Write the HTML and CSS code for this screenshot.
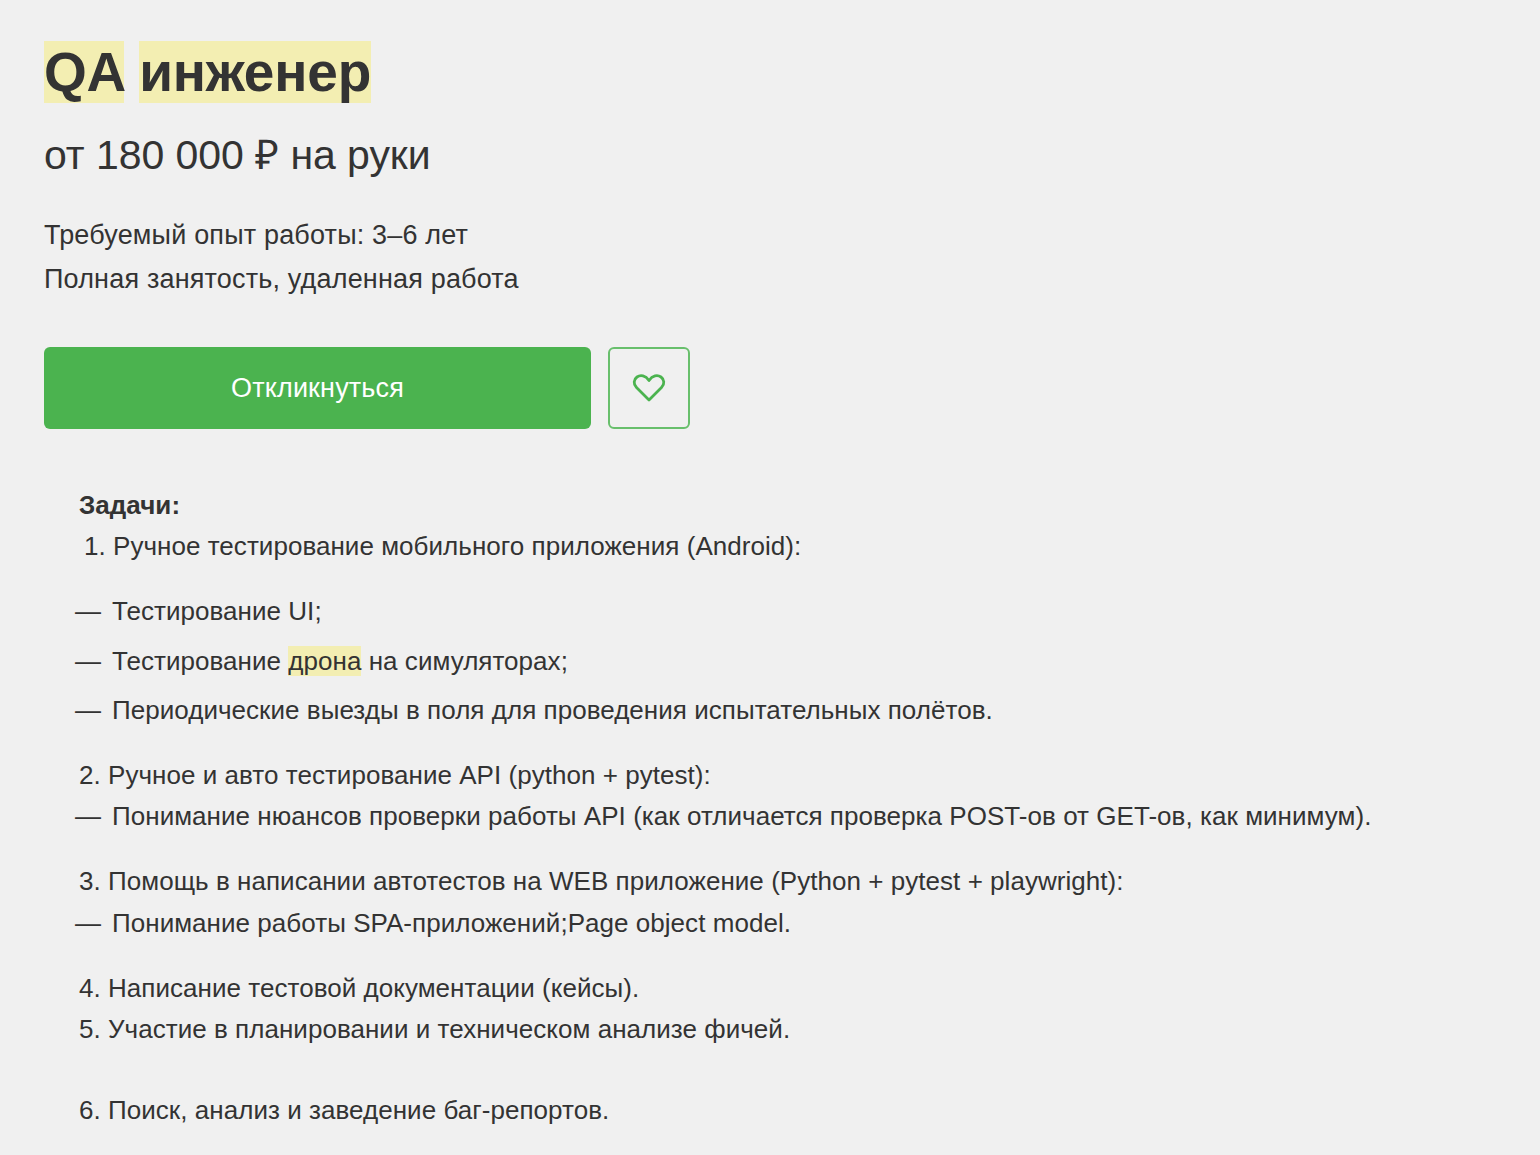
FILE: index.html
```html
<!DOCTYPE html>
<html lang="ru">
<head>
    <meta charset="UTF-8" />
    <title>QA инженер</title>
    <link rel="stylesheet" href="styles.css">
</head>
<body>
    <main class="vacancy">
        <h1 class="title"><mark>QA</mark> <mark>инженер</mark></h1>
        <p class="salary">от 180 000 ₽ на руки</p>
        <p class="meta first">Требуемый опыт работы: 3–6 лет</p>
        <p class="meta">Полная занятость, удаленная работа</p>

        <div class="actions">
            <button class="respond" type="button">Откликнуться</button>
            <button class="favorite" type="button" title="В избранное">
                <svg width="34" height="32" viewBox="0 0 34 32" fill="none" stroke="#4bb34f" stroke-width="2.8" stroke-linejoin="round">
                    <path d="M17 28 L4.5 15.5 C1 12 1.8 7.3 5 5 C8.5 2.6 13.5 3.4 17 8.5 C20.5 3.4 25.5 2.6 29 5 C32.2 7.3 33 12 29.5 15.5 Z" />
                </svg>
            </button>
        </div>

        <div class="description">
            <p class="line"><strong>Задачи:</strong></p>
            <p class="line item-first">1. Ручное тестирование мобильного приложения (Android):</p>

            <ul class="dashes spaced">
                <li>Тестирование UI;</li>
                <li>Тестирование <mark>дрона</mark> на симуляторах;</li>
                <li>Периодические выезды в поля для проведения испытательных полётов.</li>
            </ul>

            <p class="line group">2. Ручное и авто тестирование API (python + pytest):</p>
            <ul class="dashes">
                <li>Понимание нюансов проверки работы API (как отличается проверка POST-ов от GET-ов, как минимум).</li>
            </ul>

            <p class="line group">3. Помощь в написании автотестов на WEB приложение (Python + pytest + playwright):</p>
            <ul class="dashes nudged">
                <li>Понимание работы SPA-приложений;Page object model.</li>
            </ul>

            <p class="line group">4. Написание тестовой документации (кейсы).</p>
            <p class="line">5. Участие в планировании и техническом анализе фичей.</p>
            <p class="line last">6. Поиск, анализ и заведение баг-репортов.</p>
        </div>
    </main>
</body>
</html>
```

FILE: styles.css
```css
* {
  box-sizing: border-box;
}

body,
h1,
p,
ul,
li {
  margin: 0;
  padding: 0;
}

body {
  font-family: 'Liberation Sans', Arial, sans-serif;
  color: #333;
  background-color: #f0f0f0;
  height: 1155px;
  overflow: hidden;
}

.vacancy {
  padding: 41px 44px 0;
}

mark {
  background-color: #f3eeb2;
  color: inherit;
}

.title {
  font-size: 55px;
  line-height: 62px;
  font-weight: 700;
  letter-spacing: -0.2px;
}

.salary {
  font-size: 41px;
  line-height: 46px;
  margin-top: 29px;
  letter-spacing: -0.05px;
}

.meta {
  font-size: 27px;
  line-height: 45px;
  letter-spacing: 0.18px;
}

.meta.first {
  margin-top: 35px;
  margin-bottom: -1px;
}

.actions {
  display: flex;
  gap: 17px;
  margin-top: 45px;
}

.respond {
  width: 547px;
  height: 82px;
  border: none;
  border-radius: 6px;
  background-color: #4bb34f;
  color: #fff;
  font-family: inherit;
  font-size: 27px;
  font-weight: 400;
  letter-spacing: 0.15px;
  cursor: pointer;
}

.favorite {
  width: 82px;
  height: 82px;
  border: solid 2px #68bf6c;
  border-radius: 6px;
  background: transparent;
  display: flex;
  align-items: center;
  justify-content: center;
  cursor: pointer;
}

.description {
  margin-top: 56px;
  font-size: 26px;
  line-height: 41px;
  letter-spacing: 0.04px;
  padding-left: 35px;
}

.line.item-first {
  padding-left: 5px;
}

.dashes {
  list-style: none;
}

.dashes li {
  position: relative;
  padding-left: 33px;
}

.dashes li::before {
  content: '—';
  position: absolute;
  left: -4px;
}

.dashes.spaced {
  margin-top: 24px;
}

.dashes.spaced li {
  margin-bottom: 8.5px;
}

.dashes.nudged {
  margin-top: 1px;
}

.group {
  margin-top: 24px;
}

.last {
  margin-top: 40px;
}
```
